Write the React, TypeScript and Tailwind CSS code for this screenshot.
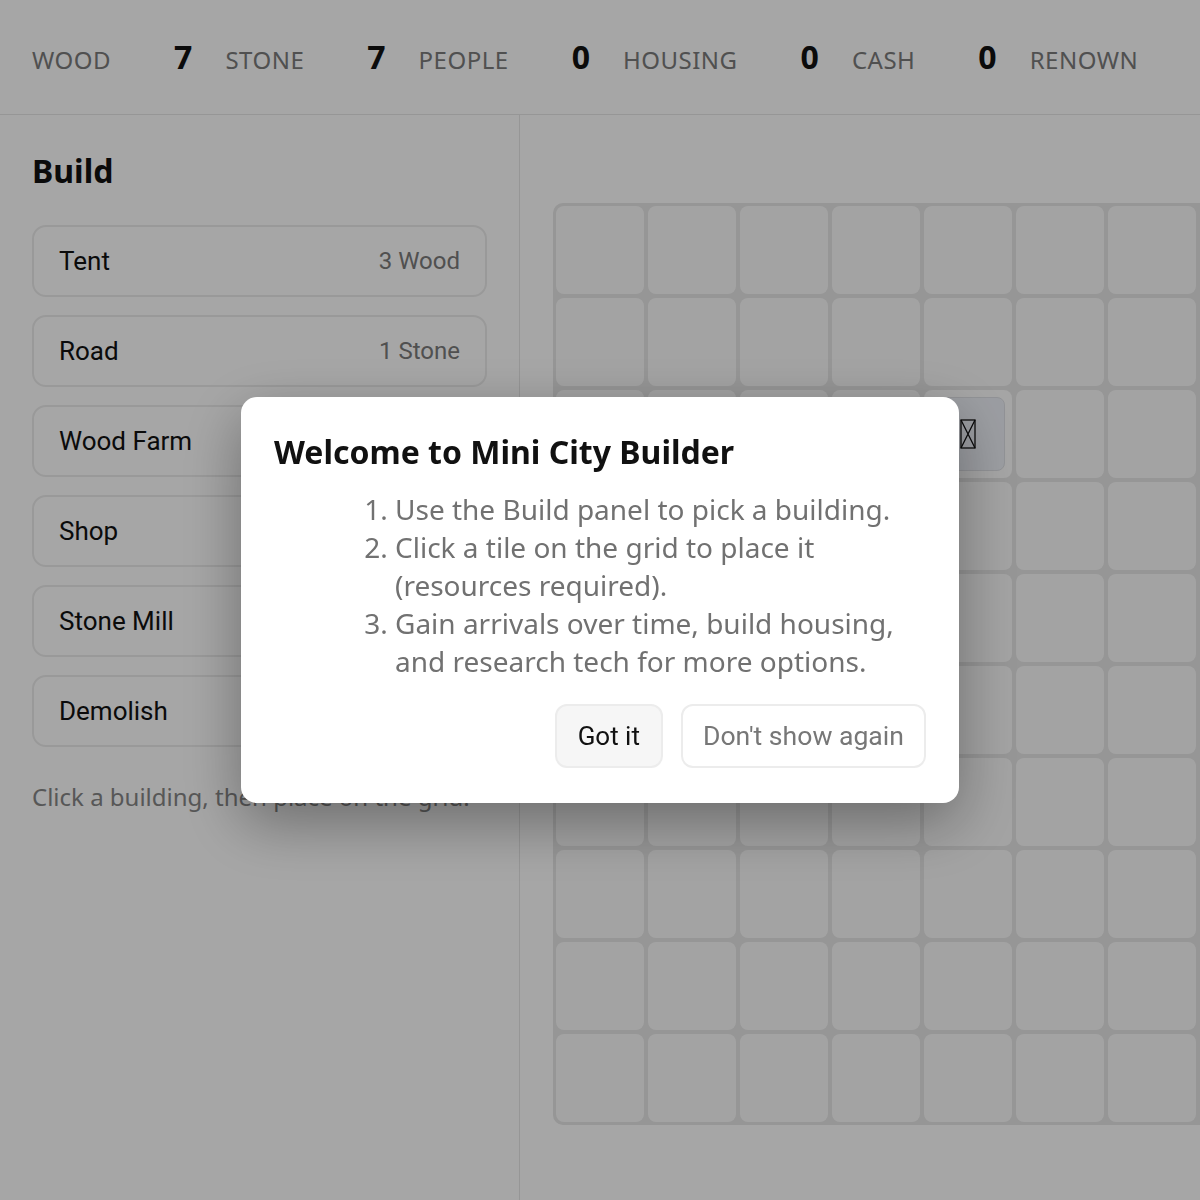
import React, { useState } from 'react';

type Resource = { label: string; value: number };
type Building = { name: string; cost?: string };

const resources: Resource[] = [
  { label: 'Wood', value: 7 },
  { label: 'Stone', value: 7 },
  { label: 'People', value: 0 },
  { label: 'Housing', value: 0 },
  { label: 'Cash', value: 0 },
  { label: 'Renown', value: 0 },
];

const buildings: Building[] = [
  { name: 'Tent', cost: '3 Wood' },
  { name: 'Road', cost: '1 Stone' },
  { name: 'Wood Farm' },
  { name: 'Shop' },
  { name: 'Stone Mill' },
  { name: 'Demolish' },
];

const GRID = 10;

const sans = "font-['Noto_Sans',sans-serif]";
const roboto = "font-['Roboto',sans-serif]";

// placeholder mark shown when a tile's icon has no glyph
const MissingGlyph = () => (
  <svg width="16" height="30" viewBox="0 0 16 30" fill="none" stroke="#111" strokeWidth="1.3">
    <rect x="1" y="1" width="14" height="28" />
    <path d="M1 1 L15 29 M15 1 L1 29" />
  </svg>
);

const ResourceBar: React.FC = () => (
  <header className="h-[114px] border-b border-[#e6e6e6] flex items-center px-[32px] box-content">
    {resources.map((r, i) => (
      <div key={r.label} className={`flex items-baseline ${i > 0 ? 'ml-[33px]' : ''}`}>
        <span className={`${sans} text-[24px] uppercase tracking-[0.5px] text-[#7b7b7b]`}>{r.label}</span>
        <span className={`${sans} ml-[63px] text-[32px] font-bold text-[#111]`}>{r.value}</span>
      </div>
    ))}
  </header>
);

const BuildPanel: React.FC = () => (
  <aside className="w-[520px] shrink-0 border-r border-[#e6e6e6] p-[32px]">
    <h2 className={`${sans} text-[32px] font-bold leading-[48px] text-[#111] mb-[30px]`}>Build</h2>
    <div className="flex flex-col gap-[18px]">
      {buildings.map((b) => (
        <button
          key={b.name}
          className={`${roboto} h-[72px] w-full flex items-center justify-between px-[25px] rounded-[14px] border-2 border-[#ececec] bg-white`}
        >
          <span className="text-[26px] text-[#111]">{b.name}</span>
          {b.cost && <span className="text-[24px] text-[#7b7b7b]">{b.cost}</span>}
        </button>
      ))}
    </div>
    <p className={`${sans} mt-[32px] text-[24px] leading-[36px] text-[#868686]`}>
      Click a building, then place on the grid.
    </p>
  </aside>
);

const CityGrid: React.FC = () => (
  <main className="flex-1 pt-[88px] pl-[33px] overflow-hidden">
    <div className="inline-grid grid-cols-[repeat(10,88px)] gap-[4px] p-[3px] rounded-[10px] bg-[#e6e6e6]">
      {Array.from({ length: GRID * GRID }).map((_, idx) => {
        const row = Math.floor(idx / GRID);
        const col = idx % GRID;
        if (row === 2 && col === 4) {
          return (
            <div key={idx} className="h-[88px] rounded-[8px] bg-[#fdfdfd] p-[7px]">
              <div className="h-full rounded-[8px] border border-[#dfe1e6] bg-[#eff2f9] flex items-center justify-center">
                <MissingGlyph />
              </div>
            </div>
          );
        }
        return <div key={idx} className="h-[88px] rounded-[8px] bg-[#fbfbfb]" />;
      })}
    </div>
  </main>
);

const WelcomeDialog: React.FC<{ onClose: () => void }> = ({ onClose }) => (
  <div className="fixed inset-0 bg-black/35 flex items-center justify-center">
    <div className="w-[718px] rounded-[16px] bg-white px-[33px] py-[35px] shadow-[0_20px_60px_rgba(0,0,0,0.35)]">
      <h3 className={`${sans} text-[32px] font-bold leading-[40px] text-[#111]`}>Welcome to Mini City Builder</h3>
      <ol className={`${sans} list-decimal pl-[121px] mt-[18px] text-[28px] leading-[38px] text-[#717171]`}>
        <li>Use the Build panel to pick a building.</li>
        <li>Click a tile on the grid to place it (resources required).</li>
        <li>Gain arrivals over time, build housing, and research tech for more options.</li>
      </ol>
      <div className={`${roboto} flex justify-end gap-[18px] mt-[24px]`}>
        <button
          onClick={onClose}
          className="h-[64px] px-[21px] rounded-[12px] border-2 border-[#ececec] bg-[#f6f6f6] text-[26px] text-[#111]"
        >
          Got it
        </button>
        <button
          onClick={onClose}
          className="h-[64px] px-[20px] rounded-[12px] border-2 border-[#ececec] bg-white text-[26.6px] text-[#777]"
        >
          Don't show again
        </button>
      </div>
    </div>
  </div>
);

export default function App() {
  const [open, setOpen] = useState(true);
  return (
    <div className="h-[1200px] w-[1200px] overflow-hidden bg-white">
      <ResourceBar />
      <div className="flex h-[1085px]">
        <BuildPanel />
        <CityGrid />
      </div>
      {open && <WelcomeDialog onClose={() => setOpen(false)} />}
    </div>
  );
}
